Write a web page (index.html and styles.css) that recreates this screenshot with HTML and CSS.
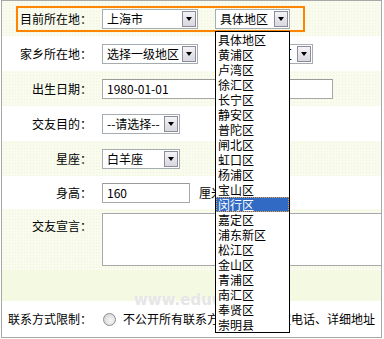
FILE: index.html
```html
<!DOCTYPE html>
<html lang="zh">
<head>
<meta charset="utf-8">
<title>资料</title>
<link rel="stylesheet" href="styles.css">
</head>
<body>
<div class="frame">
  <div class="row green r1">
    <div class="focus">
      <span class="flabel">目前所在地：</span>
      <div class="sel w96"><span class="val">上海市</span><span class="btn"></span></div>
      <div class="sel w75 gap"><span class="val">具体地区</span><span class="btn"></span></div>
    </div>
  </div>
  <div class="row">
    <span class="lbl">家乡所在地：</span>
    <div class="sel w96"><span class="val">选择一级地区</span><span class="btn"></span></div>
    <div class="sel w98 gap"><span class="val">选择二级地区</span><span class="btn"></span></div>
  </div>
  <div class="row green">
    <span class="lbl">出生日期：</span>
    <div class="inp w231">1980-01-01</div>
  </div>
  <div class="row">
    <span class="lbl">交友目的：</span>
    <div class="sel w78"><span class="val">--请选择--</span><span class="btn"></span></div>
  </div>
  <div class="row green">
    <span class="lbl">星座：</span>
    <div class="sel w78"><span class="val">白羊座</span><span class="btn"></span></div>
  </div>
  <div class="row short">
    <span class="lbl">身高：</span>
    <div class="inp w88">160</div>
    <span class="unit">厘米</span>
  </div>
  <div class="row green tall">
    <span class="lbl">交友宣言：</span>
    <div class="area"></div>
  </div>
  <div class="row band"></div>
  <div class="row last">
    <span class="lbl">联系方式限制：</span>
    <span class="radio"></span>
    <span class="rtext">不公开所有联系方式：手机固定电话、详细地址</span>
  </div>

  <span class="mark">www.eduuo.com</span>

  <ul class="list">
    <li>具体地区</li>
    <li>黄浦区</li>
    <li>卢湾区</li>
    <li>徐汇区</li>
    <li>长宁区</li>
    <li>静安区</li>
    <li>普陀区</li>
    <li>闸北区</li>
    <li>虹口区</li>
    <li>杨浦区</li>
    <li>宝山区</li>
    <li class="on">闵行区</li>
    <li>嘉定区</li>
    <li>浦东新区</li>
    <li>松江区</li>
    <li>金山区</li>
    <li>青浦区</li>
    <li>南汇区</li>
    <li>奉贤区</li>
    <li>崇明县</li>
  </ul>
</div>
</body>
</html>
```
FILE: styles.css
```css
* { box-sizing: border-box; }
html, body { margin: 0; padding: 0; background: #fff; }
body {
  font-family: "Noto Sans CJK SC", "Liberation Sans", sans-serif;
  font-size: 12px;
  color: #000;
}
.frame {
  position: relative;
  margin-left: 1px;
  width: 381px;
  height: 338px;
  border: 1px solid #a8a8a8;
  overflow: hidden;
}
.row {
  display: flex;
  align-items: center;
  height: 35px;
}
.green {
  background-color: #f8fbee;
  background-image: radial-gradient(circle, #eef5d6 0.8px, transparent 1px);
  background-size: 3px 3px;
}
.short { height: 33px; }
.tall { height: 62px; align-items: flex-start; padding-top: 4px; }
.tall .lbl { margin-top: 6px; }
.band { height: 30px; background: #f4f9e2; }
.last { height: 36px; }
.lbl {
  width: 90px;
  flex: none;
  text-align: right;
  margin-right: 10px;
  line-height: 14px;
}
.r1 { padding-left: 14px; }
.focus {
  display: flex;
  align-items: center;
  border: 2px solid #ff8400;
  padding: 1px 13px 1px 2px;
}
.flabel { width: 72px; margin-right: 10px; line-height: 14px; }
.sel {
  display: flex;
  align-items: center;
  height: 20px;
  border: 1px solid #a5acb2;
  background: #fff;
  padding-left: 4px;
  flex: none;
  white-space: nowrap;
  overflow: hidden;
}
.sel .val { line-height: 14px; }
.btn {
  position: relative;
  margin-left: auto;
  margin-right: 1px;
  width: 14px;
  height: 16px;
  flex: none;
  border: 1px solid #8d8d99;
  background: linear-gradient(#f4f3f7, #d9d7df);
}
.btn::after {
  content: "";
  position: absolute;
  left: 3px;
  top: 5px;
  border-left: 3.5px solid transparent;
  border-right: 3.5px solid transparent;
  border-top: 4px solid #000;
}
.gap { margin-left: 17px; }
.w96 { width: 96px; }
.w98 { width: 98px; }
.w75 { width: 75px; }
.w78 { width: 78px; }
.inp {
  height: 20px;
  border: 1px solid #a8a8a8;
  border-top-color: #9a9a9a;
  background: #fff;
  padding-left: 4px;
  line-height: 18px;
  flex: none;
}
.w231 { width: 231px; }
.w88 { width: 88px; }
.unit { margin-left: 9px; line-height: 14px; }
.area {
  width: 290px;
  height: 53px;
  border: 1px solid #a8a8a8;
  background: #fff;
  flex: none;
}
.radio {
  width: 13px;
  height: 13px;
  border-radius: 50%;
  border: 1px solid #8c8c8c;
  background: radial-gradient(circle at 60% 60%, #f6f6f6, #cfcfcf);
  margin-left: 1px;
  flex: none;
}
.rtext { margin-left: 7px; white-space: nowrap; line-height: 14px; }
.mark {
  position: absolute;
  left: 132px;
  top: 290px;
  font-family: "DejaVu Sans", sans-serif;
  font-size: 15px;
  font-weight: bold;
  color: #e6e6e6;
  text-shadow: 1px 1px 0 #fff;
  letter-spacing: 0px;
}
.list {
  position: absolute;
  left: 213px;
  top: 30px;
  width: 75px;
  margin: 0;
  padding: 0;
  list-style: none;
  border: 1px solid #000;
  background: #fff;
}
.list li {
  height: 15px;
  line-height: 15px;
  padding-left: 2px;
  white-space: nowrap;
}
.list li.on {
  background: #316ac5;
  color: #fff;
  outline: 1px dotted #f0a040;
  outline-offset: -1px;
}
```
